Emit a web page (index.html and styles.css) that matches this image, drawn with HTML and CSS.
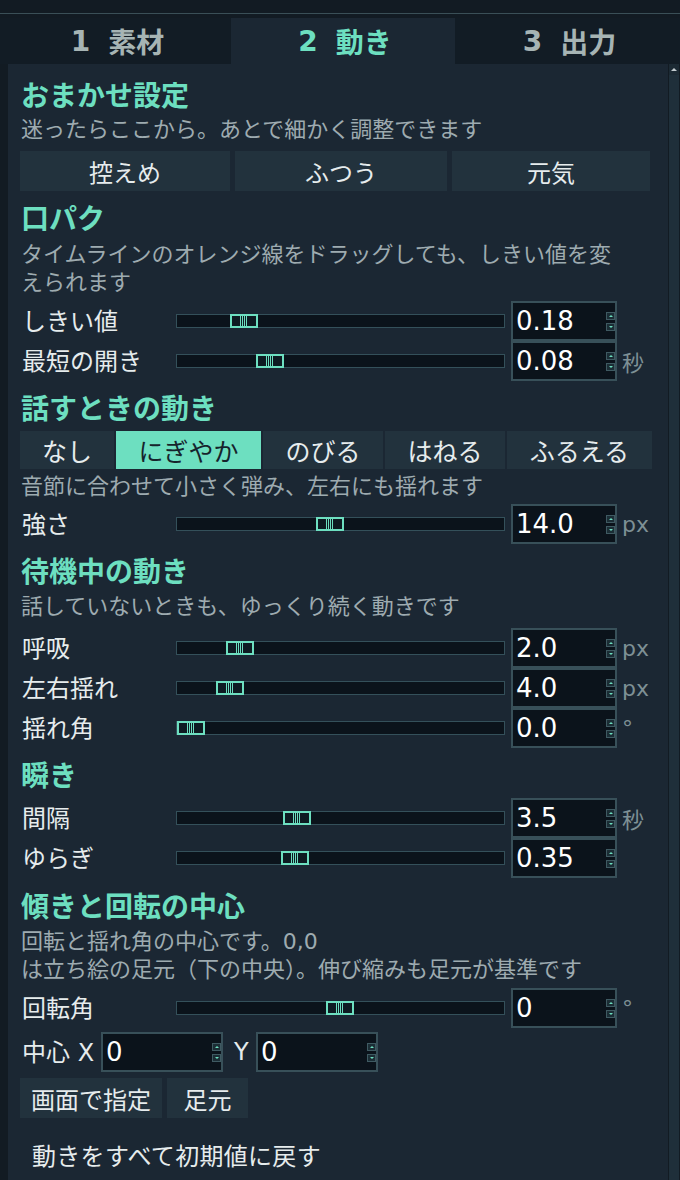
FILE: index.html
```html
<!DOCTYPE html>
<html lang="ja">
<head>
<meta charset="utf-8">
<title>動き</title>
<link rel="stylesheet" href="styles.css">
</head>
<body>
<div class="topbar"></div>
<div class="tabs">
  <div class="tab"><span class="num">1</span>素材</div>
  <div class="tab active"><span class="num">2</span>動き</div>
  <div class="tab"><span class="num">3</span>出力</div>
</div>
<div class="main">
  <div class="panel">
    <div class="h h-first">おまかせ設定</div>
    <div class="desc mt2">迷ったらここから。あとで細かく調整できます</div>
    <div class="presets mt7">
      <div class="btn">控えめ</div>
      <div class="btn">ふつう</div>
      <div class="btn">元気</div>
    </div>

    <div class="h mt12">口パク</div>
    <div class="desc mt4">タイムラインのオレンジ線をドラッグしても、しきい値を変<br>えられます</div>
    <div class="rows mt4">
      <div class="row">
        <div class="label">しきい値</div>
        <div class="track"><div class="handle" style="left:53px"></div></div>
        <div class="spin"><span class="val">0.18</span><span class="arrows"><i class="up"></i><i class="down"></i></span></div>
        <div class="unit"></div>
      </div>
      <div class="row">
        <div class="label">最短の開き</div>
        <div class="track"><div class="handle" style="left:79px"></div></div>
        <div class="spin"><span class="val">0.08</span><span class="arrows"><i class="up"></i><i class="down"></i></span></div>
        <div class="unit">秒</div>
      </div>
    </div>

    <div class="h mt12">話すときの動き</div>
    <div class="seg mt4">
      <div class="btn">なし</div>
      <div class="btn on">にぎやか</div>
      <div class="btn">のびる</div>
      <div class="btn">はねる</div>
      <div class="btn">ふるえる</div>
    </div>
    <div class="desc mt4">音節に合わせて小さく弾み、左右にも揺れます</div>
    <div class="rows mt3">
      <div class="row">
        <div class="label">強さ</div>
        <div class="track"><div class="handle" style="left:139px"></div></div>
        <div class="spin"><span class="val">14.0</span><span class="arrows"><i class="up"></i><i class="down"></i></span></div>
        <div class="unit">px</div>
      </div>
    </div>

    <div class="h mt12">待機中の動き</div>
    <div class="desc mt3">話していないときも、ゆっくり続く動きです</div>
    <div class="rows mt7">
      <div class="row">
        <div class="label">呼吸</div>
        <div class="track"><div class="handle" style="left:49px"></div></div>
        <div class="spin"><span class="val">2.0</span><span class="arrows"><i class="up"></i><i class="down"></i></span></div>
        <div class="unit">px</div>
      </div>
      <div class="row">
        <div class="label">左右揺れ</div>
        <div class="track"><div class="handle" style="left:39px"></div></div>
        <div class="spin"><span class="val">4.0</span><span class="arrows"><i class="up"></i><i class="down"></i></span></div>
        <div class="unit">px</div>
      </div>
      <div class="row">
        <div class="label">揺れ角</div>
        <div class="track"><div class="handle" style="left:0px"></div></div>
        <div class="spin"><span class="val">0.0</span><span class="arrows"><i class="up"></i><i class="down"></i></span></div>
        <div class="unit">°</div>
      </div>
    </div>

    <div class="h mt12">瞬き</div>
    <div class="rows mt4">
      <div class="row">
        <div class="label">間隔</div>
        <div class="track"><div class="handle" style="left:106px"></div></div>
        <div class="spin"><span class="val">3.5</span><span class="arrows"><i class="up"></i><i class="down"></i></span></div>
        <div class="unit">秒</div>
      </div>
      <div class="row">
        <div class="label">ゆらぎ</div>
        <div class="track"><div class="handle" style="left:104px"></div></div>
        <div class="spin"><span class="val">0.35</span><span class="arrows"><i class="up"></i><i class="down"></i></span></div>
        <div class="unit"></div>
      </div>
    </div>

    <div class="h mt13">傾きと回転の中心</div>
    <div class="desc mt3">回転と揺れ角の中心です。0,0<br>は立ち絵の足元（下の中央）。伸び縮みも足元が基準です</div>
    <div class="rows mt4">
      <div class="row">
        <div class="label">回転角</div>
        <div class="track"><div class="handle" style="left:149px"></div></div>
        <div class="spin"><span class="val">0</span><span class="arrows"><i class="up"></i><i class="down"></i></span></div>
        <div class="unit">°</div>
      </div>
    </div>
    <div class="center mt4">
      <span class="label-c">中心 X</span>
      <div class="spin spin-wide"><span class="val">0</span><span class="arrows"><i class="up"></i><i class="down"></i></span></div>
      <span class="label-y">Y</span>
      <div class="spin spin-wide"><span class="val">0</span><span class="arrows"><i class="up"></i><i class="down"></i></span></div>
    </div>
    <div class="actions mt6">
      <div class="btn w142">画面で指定</div>
      <div class="btn w81">足元</div>
    </div>
    <div class="reset">動きをすべて初期値に戻す</div>
  </div>
  <div class="scroll">
    <div class="sb-up"></div>
    <div class="sb-track"></div>
  </div>
</div>
</body>
</html>
```
FILE: styles.css
```css
* { box-sizing: border-box; }
html, body {
  margin: 0;
  padding: 0;
}
body {
  width: 680px;
  height: 1180px;
  overflow: hidden;
  background: #121b23;
  font-family: "DejaVu Sans", "Noto Sans CJK JP", sans-serif;
  color: #e6eced;
}

.topbar {
  height: 14px;
  border-bottom: 1px solid #3a4f57;
}

.tabs {
  margin-top: 4px;
  display: grid;
  grid-template-columns: 231px 224px 1fr;
  height: 46px;
}
.tab {
  display: flex;
  align-items: center;
  justify-content: center;
  font-size: 28px;
  font-weight: 700;
  color: #a6b4b4;
  background: #121c25;
  padding-left: 4px;
}
.tab.active {
  background: #1b2733;
  color: #6ddfc0;
}
.tab .num { margin-right: 18px; }

.main {
  display: flex;
  height: 1116px;
}
.panel {
  margin-left: 8px;
  width: 660px;
  background: #1b2733;
  padding: 16px 16px 0 12px;
}
.scroll {
  margin-left: 1px;
  width: 10px;
  display: flex;
  flex-direction: column;
}
.sb-up {
  height: 11px;
  background: #1c2a34;
  display: flex;
  align-items: center;
  justify-content: center;
}
.sb-up::after {
  content: "";
  border-left: 3px solid transparent;
  border-right: 3px solid transparent;
  border-bottom: 3px solid #c3ccd0;
}
.sb-track {
  flex: 1;
  background: #1f2f3a;
}

.h {
  font-size: 28px;
  font-weight: 700;
  color: #6ddfc0;
  line-height: 34px;
  height: 34px;
  padding-left: 1px;
}
.desc {
  font-size: 22px;
  line-height: 28px;
  color: #9eabb0;
  padding-left: 1px;
}
.mt2 { margin-top: 2px; }
.mt3 { margin-top: 3px; }
.mt4 { margin-top: 4px; }
.mt6 { margin-top: 6px; }
.mt7 { margin-top: 7px; }
.mt12 { margin-top: 12px; }
.mt13 { margin-top: 13px; }

.btn {
  background: #22323d;
  display: flex;
  align-items: center;
  justify-content: center;
  font-size: 24px;
  color: #e6eced;
}

.presets {
  display: grid;
  grid-template-columns: 210px 212px 198px;
  column-gap: 5px;
  height: 40px;
}

.seg {
  display: grid;
  grid-template-columns: 94px 145px 120px 120px 145px;
  column-gap: 2px;
  height: 38px;
}
.seg .btn { font-size: 25px; }
.seg .btn.on {
  background: #6ddfc0;
  color: #16242c;
}

.row {
  display: flex;
  align-items: center;
  height: 40px;
}
.label {
  width: 156px;
  font-size: 24px;
  padding-left: 2px;
  padding-bottom: 3px;
}
.track {
  position: relative;
  width: 329px;
  height: 14px;
  border: 1px solid #34505a;
  background: #0b131b;
}
.handle {
  position: absolute;
  top: -1px;
  width: 28px;
  height: 14px;
  border: 2px solid #6ddfc0;
  background: #0e1b22;
  display: flex;
  justify-content: center;
}
.handle::after {
  content: "";
  width: 8px;
  height: 100%;
  background: repeating-linear-gradient(90deg, #6ddfc0 0 1px, transparent 1px 2px);
}

.spin {
  width: 106px;
  height: 40px;
  margin-left: 6px;
  border: 2px solid #385059;
  background: #0b131b;
  display: flex;
  align-items: center;
  padding-left: 3px;
  font-size: 26px;
  color: #ffffff;
}
.spin .val { flex: 1; }
.arrows {
  display: flex;
  flex-direction: column;
  gap: 3px;
  margin-right: 0;
}
.arrows i {
  width: 9px;
  height: 8px;
  border: 1px solid #3f5a62;
  background: #1b2d35;
  display: flex;
  align-items: center;
  justify-content: center;
}
.arrows i::after {
  content: "";
  border-left: 2px solid transparent;
  border-right: 2px solid transparent;
}
.arrows i.up::after { border-bottom: 2px solid #6ddfc0; }
.arrows i.down::after { border-top: 2px solid #6ddfc0; }

.unit {
  margin-left: 5px;
  font-size: 22px;
  color: #7e9095;
}

.center {
  display: flex;
  align-items: center;
  height: 40px;
}
.label-c {
  font-size: 24px;
  padding-left: 2px;
  padding-bottom: 3px;
  width: 81px;
}
.spin-wide { width: 122px; margin-left: 0; }
.label-y {
  font-size: 24px;
  margin-left: 11px;
  width: 22px;
}

.actions {
  display: flex;
  gap: 5px;
  height: 40px;
}
.w142 { width: 142px; }
.w81 { width: 81px; }

.reset {
  margin-top: 19px;
  height: 40px;
  line-height: 40px;
  padding-left: 12px;
  font-size: 24px;
  letter-spacing: 0.3px;
  color: #e6eced;
}
```
